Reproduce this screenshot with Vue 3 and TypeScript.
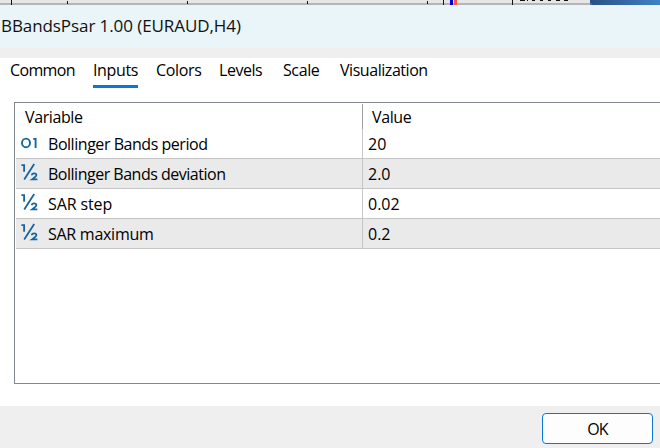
<script setup lang="ts">
interface Tab { label: string; width: number; spacing: number; active?: boolean }
interface InputRow { icon: 'int' | 'real'; name: string; value: string; spacing: number }

const tabs: Tab[] = [
  { label: 'Common', width: 65, spacing: -0.65 },
  { label: 'Inputs', width: 45, spacing: -0.35, active: true },
  { label: 'Colors', width: 45, spacing: -0.35 },
  { label: 'Levels', width: 46, spacing: -0.45 },
  { label: 'Scale', width: 39, spacing: -0.4 },
  { label: 'Visualization', width: 88, spacing: -0.45 },
]

const rows: InputRow[] = [
  { icon: 'int', name: 'Bollinger Bands period', value: '20', spacing: -0.46 },
  { icon: 'real', name: 'Bollinger Bands deviation', value: '2.0', spacing: -0.49 },
  { icon: 'real', name: 'SAR step', value: '0.02', spacing: -0.12 },
  { icon: 'real', name: 'SAR maximum', value: '0.2', spacing: -0.27 },
]
</script>

<template>
  <div class="window">
    <svg class="backdrop" width="660" height="5" shape-rendering="crispEdges">
      <defs>
        <linearGradient id="sky"><stop offset="0" stop-color="#2b5083" /><stop offset="1" stop-color="#3e82c8" /></linearGradient>
      </defs>
      <rect width="660" height="5" fill="#e6e6e6" />
      <rect y="3" width="660" height="2" fill="#b5b5b5" />
      <path d="M11 0h1v5h-1zM67 1h1v3h-1zM187 1h1v3h-1zM307 1h1v3h-1zM427 1h1v3h-1zM512 0h1v5h-1z" fill="#111" />
      <path d="M443 0h1v5h-1zM450 0h3v5h-3z" fill="#0000df" />
      <path d="M454 0h3v5h-3z" fill="#ed5b42" />
      <path d="M520 0h5v1h-5zM527 0h1v1h-1zM532 0h3v1h-3zM540 0h3v1h-3zM548 0h3v1h-3zM556 0h4v1h-4zM564 0h4v1h-4z" fill="#111" />
      <rect x="590" width="70" height="5" fill="url(#sky)" />
      <rect x="590" y="3" width="2" height="2" fill="#526d8a" />
    </svg>
    <header class="title"><span>BBandsPsar 1.00 (EURAUD,H4)</span></header>
    <main class="page">
      <nav class="tabs">
        <div v-for="t in tabs" :key="t.label" class="tab" :class="{ active: t.active }" :style="{ width: t.width + 'px', letterSpacing: t.spacing + 'px' }">{{ t.label }}</div>
      </nav>
      <section class="table">
        <div class="head">
          <div class="name">Variable</div>
          <div class="value">Value</div>
        </div>
        <div v-for="r in rows" :key="r.name" class="row">
          <div class="name">
            <svg v-if="r.icon === 'int'" class="icon" width="18" height="20" fill="none" stroke="#1466a3" stroke-width="1.9">
              <ellipse cx="5" cy="9.9" rx="4" ry="4.3" /><path d="M12.2 5.9h2.4v9.2" />
            </svg>
            <svg v-else class="icon" width="18" height="20" fill="none" stroke="#1466a3" stroke-width="1.8">
              <path d="M.4 2.1h2.7v6.7M13.2 1L3.2 16.6" />
              <path d="M10.8 12.2c.2-2.5 4.6-2.5 4.6-.1 0 1.3-1.1 2-4.3 4.3h5.3" />
            </svg>
            <span class="text" :style="{ letterSpacing: r.spacing + 'px' }">{{ r.name }}</span>
          </div>
          <div class="value text">{{ r.value }}</div>
        </div>
      </section>
    </main>
    <footer class="actions"><button type="button">OK</button></footer>
  </div>
</template>

<style>
body { margin: 0; overflow: hidden; }
</style>

<style scoped>
* { box-sizing: border-box; }
.window {
  width: 660px; height: 448px; overflow: hidden;
  display: flex; flex-direction: column;
  background: #efefef; color: #000;
  font-family: "Open Sans", "Noto Sans", sans-serif;
  font-size: 16px; font-stretch: 90%; white-space: nowrap;
}
.backdrop { display: block; flex: none; }
.title {
  flex: none; height: 43px; padding: 0 0 2px 1px; background: #e9f5f8;
  display: flex; align-items: center; font-size: 17px; letter-spacing: -0.08px; color: #111;
}
.page { margin-top: 10px; height: 348px; flex: none; background: #fff; padding: 0 0 0 10px; }
.tabs { display: flex; gap: 18px; height: 30px; }
.tab { height: 30px; line-height: 25px; flex: none; }
.active { border-bottom: 3px solid #0878d4; }
.table { height: 282px; width: 660px; margin: 14px 0 0 4px; border: 1px solid #828790; padding-left: 1px; }
.head, .row { display: flex; }
.head { height: 26px; padding-top: 1px; line-height: 27px; letter-spacing: -0.4px; }
.head .name { width: 347px; padding-left: 9px; border-right: 1px solid #a0a0a0; }
.head .value { padding-left: 9px; }
.row { height: 30px; border-bottom: 1px solid #c6c6c6; }
.row:nth-child(odd) { background: #eaeaea; }
.row .name { width: 347px; display: flex; padding-left: 5px; border-right: 1px solid #c6c6c6; }
.row .value { padding-left: 5px; }
.text { line-height: 31px; }
.icon { flex: none; margin: 4px 9px 0 0; }
.actions { height: 42px; padding: 7px 7px 0 0; display: flex; justify-content: flex-end; }
button {
  width: 111px; height: 31px; padding: 0; border: 1px solid #0878d4; border-radius: 4px;
  background: #fdfdfd; color: #000; font: inherit; letter-spacing: -0.8px;
}
</style>
